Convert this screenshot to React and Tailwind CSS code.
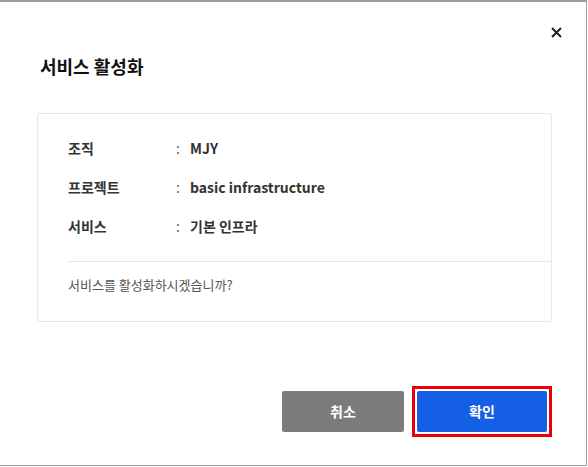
const rows = [
  { label: '조직', value: 'MJY' },
  { label: '프로젝트', value: 'basic infrastructure' },
  { label: '서비스', value: '기본 인프라' },
];

export default function App() {
  return (
    <div
      className="w-[588px] h-[467px] bg-white overflow-hidden"
      style={{ fontFamily: '"Noto Sans CJK KR", "Noto Sans", sans-serif' }}
    >
      <div className="w-[587px] h-[466px] border-t-2 border-r border-b border-[#9c9c9c] flex flex-col">
        {/* Close */}
        <div className="flex justify-end pt-[24px] pr-[24px]">
          <button className="w-[12px] h-[12px] flex items-center justify-center text-[#222]">
            <svg width="11" height="11" viewBox="0 0 11 11" fill="none">
              <path d="M1 1L10 10M10 1L1 10" stroke="currentColor" strokeWidth="2" />
            </svg>
          </button>
        </div>

        {/* Title */}
        <h2 className="mt-[15px] pl-[40px] text-[18px] leading-[26px] font-bold text-[#111]">
          서비스 활성화
        </h2>

        {/* Info card */}
        <div className="mt-[34px] ml-[37px] w-[515px] border border-[#e8e8e8] rounded-[2px] pt-[15px] pb-[26px]">
          <div className="flex flex-col pl-[30px]">
            {rows.map((row) => (
              <div key={row.label} className="flex items-center h-[39px] text-[14px] font-bold text-[#333]">
                <span className="w-[108px]">{row.label}</span>
                <span className="w-[14px] text-[#666] font-normal">:</span>
                <span>{row.value}</span>
              </div>
            ))}
          </div>
          <div className="mt-[15px] ml-[30px] h-px bg-[#e8e8e8]" />
          <p className="mt-[13px] pl-[30px] text-[13px] leading-[20px] text-[#555]">
            서비스를 활성화하시겠습니까?
          </p>
        </div>

        {/* Actions */}
        <div className="mt-[64px] flex items-center justify-end gap-[8px] pr-[34px]">
          <button className="w-[122px] h-[41px] rounded-[2px] bg-[#7b7b7b] text-white text-[14px] font-bold">
            취소
          </button>
          <div className="border-[3px] border-[#e8000b] p-[2px]">
            <button className="w-[130px] h-[41px] rounded-[2px] bg-[#145fe4] text-white text-[14px] font-bold">
              확인
            </button>
          </div>
        </div>
      </div>
    </div>
  );
}
